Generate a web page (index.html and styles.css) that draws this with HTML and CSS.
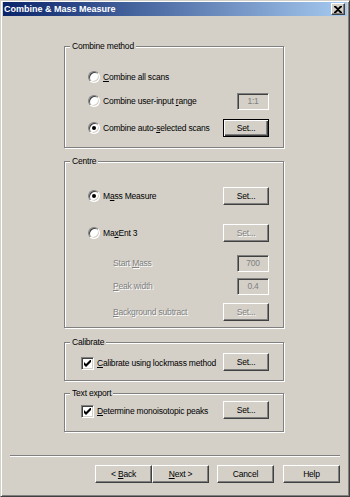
FILE: index.html
```html
<!DOCTYPE html>
<html lang="en">
<head>
  <meta charset="UTF-8">
  <title>Combine &amp; Mass Measure</title>
  <link rel="stylesheet" href="styles.css">
</head>
<body>
  <div class="window">
    <div class="titlebar">
      <span class="title">Combine &amp; Mass Measure</span>
      <button class="close-button">
        <svg width="8" height="7" viewBox="0 0 8 7"><path d="M0 0h2l2 2 2-2h2v1L5 3.5 8 6v1H6L4 5 2 7H0V6l3-2.5L0 1z" fill="#000"/></svg>
      </button>
    </div>

    <div class="content">
      <!-- Combine method -->
      <div class="group group-combine">
        <span class="group-title">Combine method</span>
        <div class="row row-1">
          <label class="option"><span class="radio"></span><span><u>C</u>ombine all scans</span></label>
        </div>
        <div class="row row-2">
          <label class="option"><span class="radio"></span><span>Combine user-input <u>r</u>ange</span></label>
          <span class="textbox">1:1</span>
        </div>
        <div class="row row-3">
          <label class="option"><span class="radio checked"></span><span>Combine auto-<u>s</u>elected scans</span></label>
          <button class="btn default">Set...</button>
        </div>
      </div>

      <!-- Centre -->
      <div class="group group-centre">
        <span class="group-title">Centre</span>
        <div class="row row-1">
          <label class="option"><span class="radio checked"></span><span>M<u>a</u>ss Measure</span></label>
          <button class="btn">Set...</button>
        </div>
        <div class="row row-2">
          <label class="option"><span class="radio"></span><span>Ma<u>x</u>Ent 3</span></label>
          <button class="btn" disabled>Set...</button>
        </div>
        <div class="row row-3">
          <span class="sub-label disabled">Start <u>M</u>ass</span>
          <span class="textbox">700</span>
        </div>
        <div class="row row-4">
          <span class="sub-label disabled"><u>P</u>eak width</span>
          <span class="textbox">0.4</span>
        </div>
        <div class="row row-5">
          <span class="sub-label disabled"><u>B</u>ackground subtract</span>
          <button class="btn" disabled>Set...</button>
        </div>
      </div>

      <!-- Calibrate -->
      <div class="group group-calibrate">
        <span class="group-title">Calibrate</span>
        <div class="row">
          <label class="option check-option">
            <span class="checkbox"><svg width="7" height="7" viewBox="0 0 7 7"><path d="M0 2l2 2 5-5v3L2 7 0 5z" fill="#000"/></svg></span>
            <span><u>C</u>alibrate using lockmass method</span>
          </label>
          <button class="btn">Set...</button>
        </div>
      </div>

      <!-- Text export -->
      <div class="group group-export">
        <span class="group-title">Text export</span>
        <div class="row">
          <label class="option check-option">
            <span class="checkbox"><svg width="7" height="7" viewBox="0 0 7 7"><path d="M0 2l2 2 5-5v3L2 7 0 5z" fill="#000"/></svg></span>
            <span><u>D</u>etermine monoisotopic peaks</span>
          </label>
          <button class="btn">Set...</button>
        </div>
      </div>

      <div class="separator"></div>

      <div class="footer">
        <button class="btn wide">&lt; <u>B</u>ack</button>
        <button class="btn wide"><u>N</u>ext &gt;</button>
        <button class="btn wide cancel">Cancel</button>
        <button class="btn wide help">Help</button>
      </div>
    </div>
  </div>
</body>
</html>
```

FILE: styles.css
```css
/* Reset */
* {
  margin: 0;
  padding: 0;
  box-sizing: border-box;
}

body {
  font-family: 'Liberation Sans', Arial, sans-serif;
  font-size: 8.5px;
  letter-spacing: -0.2px;
  color: #000;
  background-color: #d4d0c8;
  white-space: nowrap;
}

/* Window frame */
.window {
  width: 350px;
  height: 497px;
  padding: 1px 2px 2px;
  background-color: #d4d0c8;
  border: 1px solid;
  border-color: #d4d0c8 #404040 #404040 #d4d0c8;
  box-shadow: inset 1px 1px 0 #fff, inset -1px -1px 0 #808080;
}

.titlebar {
  height: 14px;
  display: flex;
  align-items: center;
  justify-content: space-between;
  padding: 0 2px 0 1px;
  background: linear-gradient(to right, #0a246a, #a6caf0);
}

.title {
  color: #fff;
  font-weight: bold;
  font-size: 9px;
  letter-spacing: 0;
  line-height: 14px;
}

.close-button {
  width: 14px;
  height: 12px;
  display: flex;
  justify-content: center;
  align-items: center;
  background-color: #d4d0c8;
  border: 1px solid;
  border-color: #fff #404040 #404040 #fff;
  box-shadow: inset -1px -1px 0 #808080;
}

/* Content */
.content {
  display: flex;
  flex-direction: column;
}

/* Group boxes */
.group {
  width: 220px;
  margin-left: 61px;
  padding: 0 14px 0 23px;
  display: flex;
  flex-direction: column;
  border: 1px solid #808080;
  box-shadow: inset 1px 1px 0 #fff, 1px 1px 0 #fff;
}

.group-title {
  align-self: flex-start;
  margin: -7px 0 0 -18px;
  padding: 0 2px;
  line-height: 13px;
  background-color: #d4d0c8;
}

.group-combine {
  margin-top: 30px;
  padding-bottom: 9px;
}

.group-combine .row-1 { margin-top: 14px; }
.group-combine .row-2 { margin-top: 4px; }
.group-combine .row-3 { margin-top: 7px; }

.group-centre {
  margin-top: 13px;
  padding-bottom: 5px;
}

.group-centre .row-1 { margin-top: 18px; }
.group-centre .row-2 { margin-top: 17px; }
.group-centre .row-3 { margin-top: 10px; }
.group-centre .row-4 { margin-top: 3px; }
.group-centre .row-5 { margin-top: 6px; }

.group-calibrate {
  margin-top: 14px;
  padding-bottom: 8px;
}

.group-calibrate .row { margin-top: 3px; }

.group-export {
  margin-top: 12px;
  padding-bottom: 11px;
}

/* Rows */
.row {
  height: 20px;
  display: flex;
  align-items: center;
  justify-content: space-between;
}

.option {
  display: flex;
  align-items: center;
  line-height: 13px;
}

.check-option {
  margin-left: -7px;
  padding-top: 3px;
}

.sub-label {
  margin-left: 25px;
  line-height: 13px;
}

.disabled {
  color: #808080;
  text-shadow: 1px 1px 0 #fff;
}

/* Radio */
.radio {
  width: 12px;
  height: 12px;
  margin-right: 3px;
  display: flex;
  justify-content: center;
  align-items: center;
  border-radius: 50%;
  background-color: #fff;
  border: 1px solid;
  border-color: #808080 #fff #fff #808080;
  box-shadow: inset 1px 1px 0 #404040, inset -1px -1px 0 #d4d0c8;
}

.radio.checked::after {
  content: '';
  width: 4px;
  height: 4px;
  border-radius: 50%;
  background-color: #000;
}

/* Checkbox */
.checkbox {
  width: 13px;
  height: 13px;
  margin-right: 3px;
  display: flex;
  justify-content: center;
  align-items: center;
  background-color: #fff;
  border: 1px solid;
  border-color: #808080 #fff #fff #808080;
  box-shadow: inset 1px 1px 0 #404040, inset -1px -1px 0 #d4d0c8;
}

/* Text boxes */
.textbox {
  width: 32px;
  height: 17px;
  line-height: 15px;
  text-align: center;
  color: #808080;
  background-color: #d4d0c8;
  border: 1px solid;
  border-color: #808080 #fff #fff #808080;
  box-shadow: inset 1px 1px 0 #404040, inset -1px -1px 0 #d4d0c8;
}

/* Buttons */
.btn {
  width: 46px;
  height: 18px;
  font-family: inherit;
  font-size: 8.5px;
  letter-spacing: -0.2px;
  color: #000;
  background-color: #d4d0c8;
  border: 1px solid;
  border-color: #fff #404040 #404040 #fff;
  box-shadow: inset -1px -1px 0 #808080;
}

.btn.default {
  border-color: #000;
  box-shadow: inset 1px 1px 0 #fff, inset -1px -1px 0 #404040, inset -2px -2px 0 #808080;
}

.btn:disabled {
  color: #808080;
  text-shadow: 1px 1px 0 #fff;
}

/* Separator and footer */
.separator {
  width: 330px;
  height: 2px;
  margin: 23px 0 0 7px;
  border-top: 1px solid #808080;
  border-bottom: 1px solid #fff;
}

.footer {
  display: flex;
  justify-content: flex-end;
  margin: 8px 7px 0 0;
}

.btn.wide {
  width: 57px;
}

.btn.cancel {
  margin-left: 8px;
}

.btn.help {
  margin-left: 9px;
}
```
